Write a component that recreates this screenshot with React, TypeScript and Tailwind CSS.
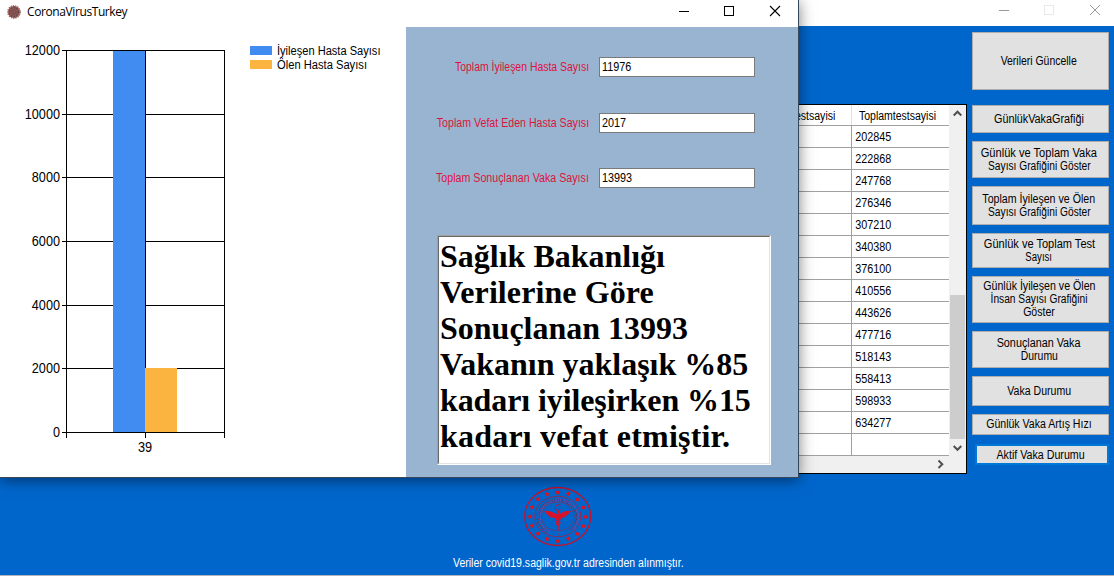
import React from "react";

const tests = [
  "202845", "222868", "247768", "276346", "307210", "340380", "376100",
  "410556", "443626", "477716", "518143", "558413", "598933", "634277", "",
];

const actions = [
  { lines: ["Verileri Güncelle"], box: "h-[58px]", fit: ["scale-x-[0.87]"] },
  { lines: ["GünlükVakaGrafiği"], box: "mt-[15px] h-[28px]", fit: ["scale-x-[0.9]"] },
  { lines: ["Günlük ve Toplam Vaka", "Sayısı Grafiğini Göster"], box: "mt-[8px] h-[37px]", fit: ["scale-x-[0.925]", "scale-x-[0.85]"] },
  { lines: ["Toplam İyileşen ve Ölen", "Sayısı Grafiğini Göster"], box: "mt-[8px] h-[39px]", fit: ["scale-x-[0.885]", "scale-x-[0.85]"] },
  { lines: ["Günlük ve Toplam Test", "Sayısı"], box: "mt-[8px] h-[35px]", fit: ["scale-x-[0.92]", "scale-x-[0.8]"] },
  { lines: ["Günlük İyileşen ve Ölen", "İnsan Sayısı Grafiğini", "Göster"], box: "mt-[8px] h-[47px]", fit: ["scale-x-[0.885]", "scale-x-[0.85]", "scale-x-[0.88]"] },
  { lines: ["Sonuçlanan Vaka", "Durumu"], box: "mt-[8px] h-[37px]", fit: ["scale-x-[0.9]", "scale-x-[0.87]"] },
  { lines: ["Vaka Durumu"], box: "mt-[8px] h-[30px]", fit: ["scale-x-[0.88]"] },
  { lines: ["Günlük Vaka Artış Hızı"], box: "mt-[8px] h-[21px]", fit: ["scale-x-[0.88]"] },
];

function Actions() {
  return (
    <div className="flex w-[137px] flex-col pt-[6px]">
      {actions.map((a) => (
        <button key={a.lines.join()} className={`flex shrink-0 flex-col items-center justify-center border border-[#adadad] bg-[#e1e1e1] pr-[3px] ${a.box}`}>
          {a.lines.map((line, i) => (
            <span key={line} className={`block h-[13px] whitespace-nowrap leading-[13px] ${a.fit[i]}`}>{line}</span>
          ))}
        </button>
      ))}
      <button className="ml-[3px] mt-[9px] flex h-[21px] shrink-0 items-center justify-center border-2 border-[#0078d7] bg-[#e1e1e1] pr-[2px]">
        <span className="block scale-x-[0.89] whitespace-nowrap">Aktif Vaka Durumu</span>
      </button>
    </div>
  );
}

function Grid() {
  return (
    <div className="flex h-[370px] w-[967px] flex-col border border-black bg-[#f0f0f0]">
      <div className="flex h-[351px]">
        <div className="w-[948px] bg-white">
          <div className="flex h-[21px] border-b border-[#a0a0a0] leading-[22px]">
            <div className="w-[851px] border-r border-[#e0e0e0] pr-[16px] text-right">
              <span className="inline-block origin-right scale-x-[0.88]">Gunluktestsayisi</span>
            </div>
            <div className="origin-left scale-x-[0.875] pl-[8px]">Toplamtestsayisi</div>
          </div>
          {tests.map((t, i) => (
            <div key={i} className="flex h-[22px] border-b border-[#a0a0a0] leading-[22px]">
              <div className="w-[851px] border-r border-[#a0a0a0]" />
              <div className="origin-left scale-x-[0.9] pl-[3.5px]">{t}</div>
            </div>
          ))}
        </div>
        <div className="flex w-[17px] flex-col items-center">
          <svg width="17" height="17" fill="none" stroke="#505050" strokeWidth="2"><path d="M4.7 10.5 8.5 6.7l3.8 3.8" /></svg>
          <div className="mt-[173px] h-[144px] w-[15px] bg-[#cdcdcd]" />
          <svg width="17" height="17" fill="none" stroke="#505050" strokeWidth="2"><path d="M4.7 7 8.5 10.8 12.3 7" /></svg>
        </div>
      </div>
      <div className="flex h-[17px] justify-end pr-[17px]">
        <svg width="17" height="17" fill="none" stroke="#505050" strokeWidth="2"><path d="M6.5 4.5 10.3 8.3 6.5 12" /></svg>
      </div>
    </div>
  );
}

function star(cx: number, cy: number, r: number) {
  return Array.from({ length: 10 }, (_, i) => {
    const a = -Math.PI / 2 + (i * Math.PI) / 5;
    const q = i % 2 ? r * 0.5 : r;
    return `${(cx + q * Math.cos(a)).toFixed(2)},${(cy + q * Math.sin(a)).toFixed(2)}`;
  }).join(" ");
}

function Emblem() {
  return (
    <svg width="70" height="62" viewBox="0 0 70 62" fill="none" stroke="#c0142c">
      <ellipse cx="34.7" cy="31.5" rx="33" ry="29" strokeWidth="1.3" />
      <ellipse cx="34.7" cy="31.5" rx="23" ry="20.2" strokeWidth=".7" />
      <ellipse cx="34.7" cy="31.5" rx="16.5" ry="14.3" strokeWidth=".5" />
      {Array.from({ length: 16 }, (_, i) => (
        <polygon key={i} fill="#e81018" stroke="none" points={star(34.7 + 27.8 * Math.sin((i * Math.PI) / 8), 31.5 - 24.3 * Math.cos((i * Math.PI) / 8), 2.7)} />
      ))}
      <path id="ring" stroke="none" d="M26.5 45.9A18 15.7 0 1 1 43.5 45.9" />
      <text fill="#c0142c" stroke="none" fontSize="4.2">
        <textPath href="#ring" textLength="84">TÜRKİYE CUMHURİYETİ SAĞLIK BAKANLIĞI</textPath>
      </text>
      <path d="M37.3 20.5a2.9 2.9 0 1 0 .2 4" strokeWidth="1" />
      <circle cx="35" cy="27" r="1.3" fill="#e01020" stroke="none" />
      <path fill="#d8122a" stroke="none" d="M34 29.3Q27 25 20.5 26l3 1.6-1.5.6 3.2 1.2-1.2.9 3.5.8-1 1.1 4.5.6 1.8 1h3.4l1.8-1 4.5-.6-1-1.1 3.5-.8-1.2-.9 3.2-1.2-1.5-.6 3-1.6Q43 25 36 29.3Z" />
      <path stroke="#e01020" d="M35 28v17M32.5 33c0 3 5 2 4.5 5-.3 2-3 2-2 4M37.5 33c0 3-5 2-4.5 5 .3 2 3 2 2 4" strokeWidth="1.3" />
      <circle cx="35" cy="49" r=".7" fill="#e01020" stroke="none" />
    </svg>
  );
}

const ticks = [
  [50, "12000"], [114, "10000"], [177, "8000"], [241, "6000"], [305, "4000"], [368, "2000"], [432, "0"],
] as const;

function Chart() {
  return (
    <svg width="406" height="450" viewBox="0 27 406 450" className="shrink-0">
      <g stroke="#000" shapeRendering="crispEdges">
        {ticks.map(([y]) => <path key={y} d={`M62 ${y + 0.5}H225`} />)}
        <path d="M66.5 50V438M224.5 50V438M145.5 50V438" />
      </g>
      <rect x="113" y="51" width="32" height="381" fill="#418cf0" />
      <rect x="145" y="368" width="32" height="64" fill="#fcb441" />
      <g fontSize="14">
        {ticks.map(([y, t]) => (
          <text key={y} x="60" y={y + 5} textAnchor="end" textLength={t.length * 7.05} lengthAdjust="spacingAndGlyphs">{t}</text>
        ))}
        <text x="138" y="452" textLength="14.2" lengthAdjust="spacingAndGlyphs">39</text>
      </g>
      <rect x="250" y="46" width="22" height="9" fill="#418cf0" />
      <rect x="250" y="60" width="22" height="9" fill="#fcb441" />
      <g fontSize="12">
        <text x="277" y="55" textLength="103.5" lengthAdjust="spacingAndGlyphs">İyileşen Hasta Sayısı</text>
        <text x="277" y="69" textLength="90" lengthAdjust="spacingAndGlyphs">Ölen Hasta Sayısı</text>
      </g>
    </svg>
  );
}

const fields = [
  { label: "Toplam İyileşen Hasta Sayısı", value: "11976", pos: "mt-[30px]", fit: "scale-x-[0.87]" },
  { label: "Toplam Vefat Eden Hasta Sayısı", value: "2017", pos: "mt-[36px]", fit: "scale-x-[0.885]" },
  { label: "Toplam Sonuçlanan Vaka Sayısı", value: "13993", pos: "mt-[35px]", fit: "scale-x-[0.89]" },
];

function VirusIcon() {
  return (
    <svg width="16" height="16" viewBox="0 0 16 16">
      <circle cx="8" cy="8" r="6" fill="#8c5450" stroke="#a86060" strokeWidth="1.8" strokeDasharray="1.3 .9" />
      <circle cx="8" cy="8" r="4.5" fill="none" stroke="#5a4a50" strokeWidth="1.4" strokeDasharray="1.3 1.6" />
      <circle cx="8" cy="8" r="2" fill="none" stroke="#5a4a50" strokeWidth="1.2" strokeDasharray="1.3 1.4" />
    </svg>
  );
}

function ResultWindow() {
  return (
    <div className="absolute left-0 top-0 flex h-[478px] w-[799px] flex-col border-b border-r border-[#36495c] bg-white shadow-[0_2px_14px_rgba(0,0,0,0.5)]">
      <header className="flex h-[27px] shrink-0 items-start justify-between">
        <div className="flex items-center gap-[5px] pl-[6px] pt-[3px]">
          <VirusIcon />
          <span className="font-['Open_Sans','Noto_Sans',sans-serif] text-[12px] leading-[17px] tracking-[-0.4px]">CoronaVirusTurkey</span>
        </div>
        <svg width="120" height="27" fill="none" stroke="#000" className="shrink-0">
          <path d="M1 11.5h10M46.5 6.5h9v9h-9z" shapeRendering="crispEdges" />
          <path d="m92 6 10 10M102 6 92 16" strokeWidth="1.1" />
        </svg>
      </header>
      <div className="flex">
        <Chart />
        <section className="flex h-[450px] w-[392px] flex-col bg-[#99b4d1]">
          {fields.map((f) => (
            <label key={f.label} className={`flex h-[20px] items-center justify-end gap-[10px] pr-[43px] ${f.pos}`}>
              <span className={`origin-right whitespace-nowrap text-[#dc143c] ${f.fit}`}>{f.label}</span>
              <span className="h-[20px] w-[156px] border border-[#7a7a7a] bg-white pl-[2px] leading-[18px]">
                <span className="inline-block origin-left scale-x-[0.9]">{f.value}</span>
              </span>
            </label>
          ))}
          <div className="ml-[31px] mt-[47px] h-[230px] w-[334px] border border-b-white border-l-[#a0a0a0] border-r-white border-t-[#a0a0a0]">
            <p className="h-full whitespace-nowrap border border-b-[#e3e3e3] border-l-[#696969] border-r-[#e3e3e3] border-t-[#696969] bg-white pl-[1px] pt-[1px] font-['Liberation_Serif',serif] text-[32px] font-bold leading-[36px]">
              Sağlık Bakanlığı<br />
              <span className="tracking-[0.1px]">Verilerine Göre</span><br />
              Sonuçlanan 13993<br />
              Vakanın yaklaşık %85<br />
              <span className="tracking-[-0.1px]">kadarı iyileşirken %15</span><br />
              <span className="tracking-[0.2px]">kadarı vefat etmiştir.</span>
            </p>
          </div>
        </section>
      </div>
    </div>
  );
}

export default function App() {
  return (
    <main className="relative flex h-[576px] w-[1114px] flex-col overflow-hidden bg-[#0066cc] font-['Liberation_Sans',sans-serif] text-[12px] text-black">
      <header className="flex h-[26px] shrink-0 justify-end bg-white">
        <svg width="120" height="26" fill="none" stroke="#999">
          <path d="M5 10.5h10" shapeRendering="crispEdges" />
          <path d="M50.5 5.5h9v9h-9z" stroke="#e8e8e8" shapeRendering="crispEdges" />
          <path d="m96 5 10 10M106 5 96 15" />
        </svg>
      </header>
      <div className="flex flex-1 gap-[5px] border-b border-[#b0b4b8]">
        <div className="flex w-[967px] flex-col pt-[78px]">
          <Grid />
          <footer className="flex w-[1114px] flex-col pt-[11px] text-white">
            <div className="h-[62px] pl-[523px]"><Emblem /></div>
            <p className="ml-[453px] mt-[9px] origin-left scale-x-[0.876] whitespace-nowrap leading-[14px]">Veriler covid19.saglik.gov.tr adresinden alınmıştır.</p>
          </footer>
        </div>
        <Actions />
      </div>
      <ResultWindow />
    </main>
  );
}
